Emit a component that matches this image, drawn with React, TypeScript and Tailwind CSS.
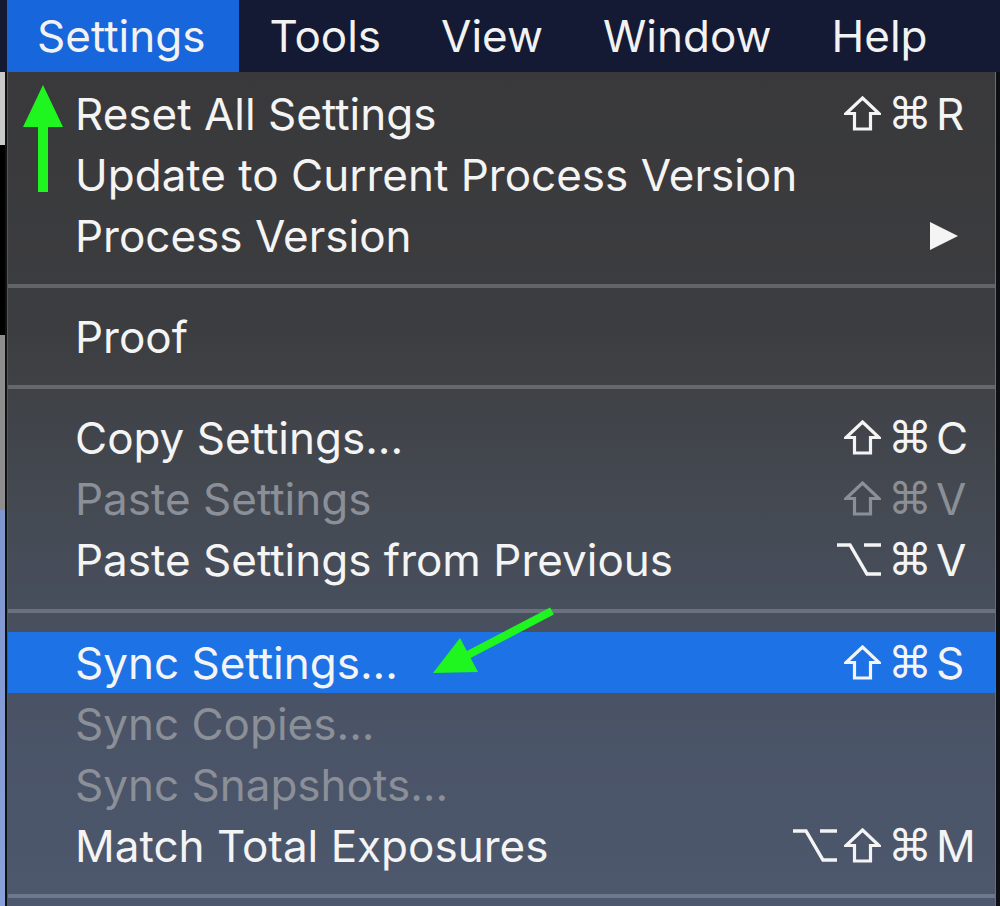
import React from "react";

type Mod = "opt" | "shift" | "cmd";

type Item =
  | { kind: "sep"; h?: string }
  | {
      kind: "item";
      label: string;
      mods?: Mod[];
      keyName?: string;
      disabled?: boolean;
      active?: boolean;
      submenu?: boolean;
    };

const menuBar = ["Settings", "Tools", "View", "Window", "Help"];

const items: Item[] = [
  { kind: "item", label: "Reset All Settings", mods: ["shift", "cmd"], keyName: "R" },
  { kind: "item", label: "Update to Current Process Version" },
  { kind: "item", label: "Process Version", submenu: true },
  { kind: "sep" },
  { kind: "item", label: "Proof" },
  { kind: "sep" },
  { kind: "item", label: "Copy Settings...", mods: ["shift", "cmd"], keyName: "C" },
  { kind: "item", label: "Paste Settings", mods: ["shift", "cmd"], keyName: "V", disabled: true },
  { kind: "item", label: "Paste Settings from Previous", mods: ["opt", "cmd"], keyName: "V" },
  { kind: "sep", h: "h-[42px]" },
  { kind: "item", label: "Sync Settings...", mods: ["shift", "cmd"], keyName: "S", active: true },
  { kind: "item", label: "Sync Copies...", disabled: true },
  { kind: "item", label: "Sync Snapshots...", disabled: true },
  { kind: "item", label: "Match Total Exposures", mods: ["opt", "shift", "cmd"], keyName: "M" },
  { kind: "sep" },
];

const font = { fontFamily: "Inter, 'Noto Sans', sans-serif" };

// modifier key glyphs, drawn to match the macOS menu strokes
function ModIcon({ mod, color }: { mod: Mod; color: string }) {
  if (mod === "shift") {
    return (
      <svg width="37" height="35" viewBox="0 0 37 35" className="shrink-0">
        <path
          d="M18.5 2 L35 17.5 H26.5 V33 H10.5 V17.5 H2 Z"
          fill="none"
          stroke={color}
          strokeWidth="3.2"
          strokeLinejoin="miter"
        />
      </svg>
    );
  }
  if (mod === "opt") {
    return (
      <svg width="44" height="35" viewBox="0 0 44 35" className="shrink-0">
        <path
          d="M0 3 H13 L30 32 H44 M27 3 H44"
          fill="none"
          stroke={color}
          strokeWidth="3.4"
        />
      </svg>
    );
  }
  return (
    <span
      className="text-[44px] leading-none"
      style={{ fontFamily: "'DejaVu Sans', sans-serif" }}
    >
      ⌘
    </span>
  );
}

function Row({ item }: { item: Extract<Item, { kind: "item" }> }) {
  const color = item.disabled ? "#8b8f97" : "#f4f4f4";
  const tc = item.disabled ? "text-[#8b8f97]" : "text-[#f4f4f4]";
  return (
    <div
      className={`flex h-[61px] items-center pl-[67px] pr-[17px] ${
        item.active ? "bg-[#1d72e6]" : ""
      }`}
    >
      <span className={`flex-1 text-[44px] leading-none ${tc}`}>{item.label}</span>
      {item.submenu && (
        <svg width="30" height="30" viewBox="0 0 30 30" className="mr-[19px]">
          <path d="M1 1 L29 15 L1 29 Z" fill="#f4f4f4" />
        </svg>
      )}
      {item.keyName && item.mods && (
        <div className={`flex items-center text-[44px] leading-none ${tc}`}>
          <div className="flex items-center gap-[7px]">
            {item.mods.map((m) => (
              <ModIcon key={m} mod={m} color={color} />
            ))}
          </div>
          <span className="ml-[4px] w-[42px]">{item.keyName}</span>
        </div>
      )}
    </div>
  );
}

export default function App() {
  return (
    <div className="flex h-[906px] w-[1000px] flex-col overflow-hidden bg-black" style={font}>
      {/* menu bar */}
      <div className="flex h-[72px] shrink-0 items-center bg-[#141a33] pl-[7px]">
        {menuBar.map((m, i) => (
          <div
            key={m}
            className={`flex h-full items-center text-[44px] leading-none text-[#f2f2f2] ${
              i === 0 ? "bg-[#1766dc] pl-[30px] pr-[34px]" : "px-[30px]"
            }`}
          >
            {m}
          </div>
        ))}
      </div>

      <div className="relative flex flex-1">
        {/* what shows behind, left of the menu */}
        <div className="flex w-[5px] flex-col">
          <div className="h-[73px] bg-[#c9c9c9]" />
          <div className="h-[190px] bg-black" />
          <div className="h-[175px] bg-[#8e8e8e]" />
          <div className="flex-1 bg-[linear-gradient(180deg,#7f97cf,#8aa0d8)]" />
        </div>
        <div className="w-[2px] bg-[#111]" />

        {/* menu panel */}
        <div className="flex-1 border-r border-l border-r-[#6a6d73] border-l-[#55575b] bg-[linear-gradient(180deg,#39393b_0%,#3c3d40_30%,#444951_50%,#4a5366_75%,#4d586e_100%)] pt-[11px]">
          {items.map((it, i) =>
            it.kind === "sep" ? (
              <div key={i} className={`flex items-center ${it.h ?? "h-[40px]"}`}>
                <div className="h-[4px] w-full bg-white/20" />
              </div>
            ) : (
              <Row key={i} item={it} />
            )
          )}
        </div>

        <div className="w-[4px] bg-[#0d0f14]" />

        {/* annotation arrows */}
        <svg
          className="pointer-events-none absolute left-0 top-0"
          width="1000"
          height="834"
          viewBox="0 72 1000 834"
        >
          <polygon points="43,85 63,127 23,127" fill="#1ff51f" />
          <rect x="38" y="125" width="10" height="67" fill="#1ff51f" />
          <line x1="552" y1="611" x2="462" y2="658" stroke="#1ff51f" strokeWidth="8" />
          <polygon points="460,638 433,673 478,672" fill="#1ff51f" />
        </svg>
      </div>
    </div>
  );
}
